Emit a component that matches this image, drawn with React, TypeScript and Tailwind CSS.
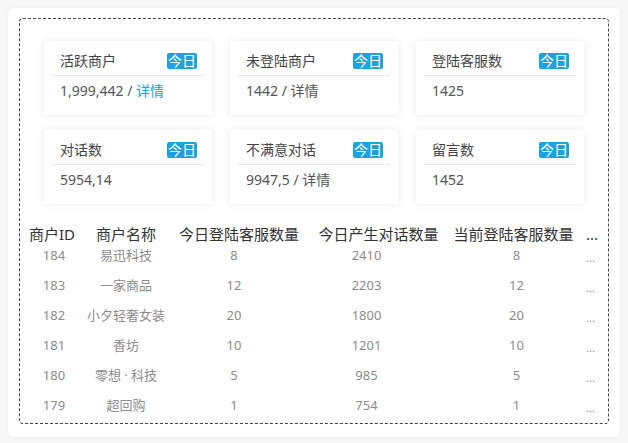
import React from 'react';

interface Stat {
  title: string;
  value: string;
  link?: 'blue' | 'gray';
}

const stats: Stat[] = [
  { title: '活跃商户', value: '1,999,442', link: 'blue' },
  { title: '未登陆商户', value: '1442', link: 'gray' },
  { title: '登陆客服数', value: '1425' },
  { title: '对话数', value: '5954,14' },
  { title: '不满意对话', value: '9947,5', link: 'gray' },
  { title: '留言数', value: '1452' },
];

const rows = [
  ['184', '易迅科技', '8', '2410', '8'],
  ['183', '一家商品', '12', '2203', '12'],
  ['182', '小夕轻奢女装', '20', '1800', '20'],
  ['181', '香坊', '10', '1201', '10'],
  ['180', '零想 · 科技', '5', '985', '5'],
  ['179', '超回购', '1', '754', '1'],
];

const font = { fontFamily: '"Noto Sans", "Noto Sans CJK SC", sans-serif' };

function StatCard({ stat }: { stat: Stat }) {
  return (
    <div className="h-[74px] bg-white pt-3 shadow-[0_0_8px_rgba(0,0,0,0.08)]">
      <div className="mx-2 flex h-4 items-center justify-between pl-2 pr-[7px]">
        <span className="text-[14px] leading-none text-[#444]">{stat.title}</span>
        <span className="rounded-[2px] bg-[#1ba3dd] px-[1px] text-[14px] leading-4 text-white">今日</span>
      </div>
      <div className="mx-2 mt-[6px] border-t border-[#e9e9e9]" />
      <div className="mt-[5px] pl-4 text-[14px] leading-5 text-[#555]">
        {stat.value}
        {stat.link && (
          <>
            {' / '}
            <span className={stat.link === 'blue' ? 'text-[#1a9fd8]' : 'text-[#555]'}>详情</span>
          </>
        )}
      </div>
    </div>
  );
}

export default function App() {
  const cols = 'grid grid-cols-[64px_84px_142px_137px_133px_28px]';
  return (
    <div className="h-[443px] w-[628px] bg-[#f7f7f7] p-2" style={font}>
      <div className="h-[429px] rounded-md bg-white pl-[11px] pr-[11px] pt-[10px] shadow-[0_0_4px_rgba(0,0,0,0.04)]">
        <div className="h-[406px] rounded border border-dashed border-[#444] pl-[24px] pt-[22px]">
          <div className="grid w-[540px] grid-cols-3 gap-x-[18px] gap-y-[15px]">
            {stats.map((s) => (
              <StatCard key={s.title} stat={s} />
            ))}
          </div>

          <div className="-ml-[24px] mt-5">
            <div className={`${cols} h-5 items-center text-[15px] leading-5 text-[#333]`}>
              <div className="text-center">商户ID</div>
              <div className="text-center">商户名称</div>
              <div className="text-center">今日登陆客服数量</div>
              <div className="text-center">今日产生对话数量</div>
              <div className="text-center">当前登陆客服数量</div>
              <div className="pl-[6px]">...</div>
            </div>
            <div className="-mt-[3px]">
              {rows.map((r) => (
                <div key={r[0]} className={`${cols} h-[30px] items-center text-[13px] text-[#8c8c8c]`}>
                  <div className="pl-[4px] text-center">{r[0]}</div>
                  <div className="text-center">{r[1]}</div>
                  <div className="pr-[10px] text-center">{r[2]}</div>
                  <div className="pr-[24px] text-center">{r[3]}</div>
                  <div className="pl-[6px] text-center">{r[4]}</div>
                  <div className="pl-[6px] pt-[4px] text-[11px]">...</div>
                </div>
              ))}
            </div>
          </div>
        </div>
      </div>
    </div>
  );
}
